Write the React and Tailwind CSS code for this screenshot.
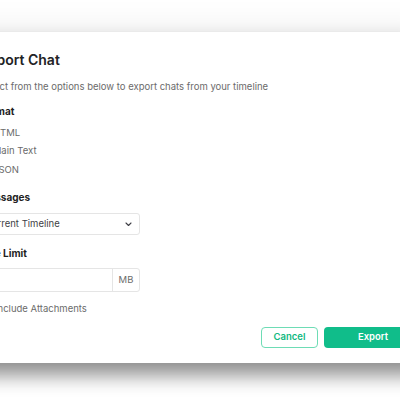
import { useState } from "react";

const FORMATS = ["HTML", "Plain Text", "JSON"];

export default function App() {
  const [format, setFormat] = useState("HTML");
  const [attach, setAttach] = useState(false);

  return (
    <div className="h-[400px] w-[400px] overflow-hidden bg-white font-['Inter',sans-serif]">
      <div className="ml-[-40px] mt-[32px] flex w-[470px] flex-col bg-white pl-[20px] pr-[8px] pt-[18px] pb-[15px] shadow-[0_12px_18px_rgba(0,0,0,0.42),0_0_34px_rgba(0,0,0,0.09)]">
        <h2 className="text-[14px] font-semibold leading-[20px] text-[#222225]">Export Chat</h2>
        <p className="mt-[10px] text-[9.5px] leading-[14px] text-[#6b6b6b]">
          Select from the options below to export chats from your timeline
        </p>

        <h3 className="mt-[10px] text-[10px] font-bold leading-[14px] text-[#1f1f1f]">Format</h3>
        <div className="mt-[5.75px] flex flex-col">
          {FORMATS.map((f) => (
            <label key={f} className="flex h-[18.5px] items-center gap-[3px] text-[9.5px] text-[#6b6b6b]">
              <span
                onClick={() => setFormat(f)}
                className={`h-[10px] w-[10px] rounded-full border ${format === f ? "border-[3px] border-[#10b981]" : "border-[#d4d4d8]"}`}
              />
              {f}
            </label>
          ))}
        </div>

        <h3 className="mt-[10.75px] text-[10px] font-bold leading-[14px] text-[#1f1f1f]">Messages</h3>
        <div className="mt-[9px] flex h-[22px] w-[160px] items-center justify-between rounded-[3px] border border-[#e5e5e5] pl-[4px] pr-[7px] text-[9.5px] text-[#3f3f46]">
          <span>Current Timeline</span>
          <svg width="7" height="5" viewBox="0 0 7 5" fill="none">
            <path d="M1 1l2.5 2.5L6 1" stroke="#3f3f46" strokeWidth="1.1" strokeLinecap="round" strokeLinejoin="round" />
          </svg>
        </div>

        <h3 className="mt-[11px] text-[10px] font-bold leading-[14px] text-[#1f1f1f]">Size Limit</h3>
        <div className="mt-[8px] flex h-[24px] w-[160px] rounded-[3px] border border-[#e5e5e5] text-[9.5px]">
          <input className="min-w-0 flex-1 bg-transparent px-[8px] outline-none" />
          <span className="flex w-[27px] items-center justify-center border-l border-[#e5e5e5] text-[#6b6b6b]">MB</span>
        </div>

        <label className="mt-[10px] flex h-[14px] items-center gap-[5px] text-[9.5px] text-[#6b6b6b]">
          <span
            onClick={() => setAttach(!attach)}
            className={`h-[10px] w-[10px] rounded-[2px] border ${attach ? "border-[#10b981] bg-[#10b981]" : "border-[#d4d4d8]"}`}
          />
          Include Attachments
        </label>

        <div className="mt-[11px] flex justify-end gap-[6px]">
          <button className="h-[21px] w-[57px] rounded-[4px] border border-[#6edcb5] bg-white text-[9.5px] font-semibold text-[#10b981]">
            Cancel
          </button>
          <button className="h-[21px] w-[98px] rounded-[4px] bg-[#10bd8a] text-[9.5px] font-semibold text-white">
            Export
          </button>
        </div>
      </div>
    </div>
  );
}
